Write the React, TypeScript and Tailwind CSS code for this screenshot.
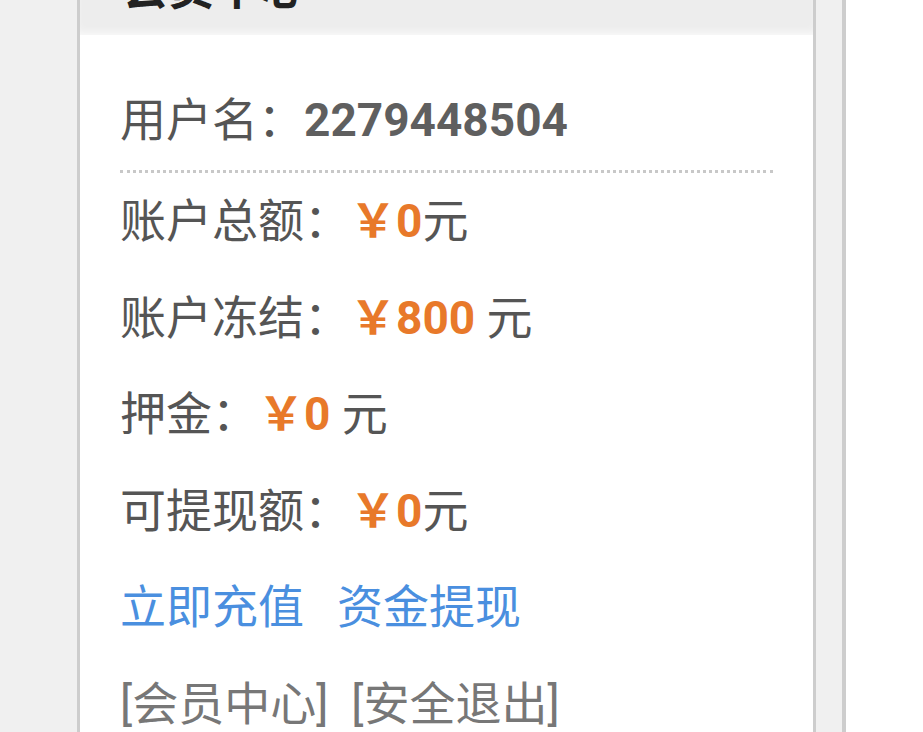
import React from 'react';

type Row = {
    label: string;
    amount: string;
    gap: boolean;
};

const rows: Row[] = [
    { label: '账户总额：', amount: '￥0', gap: false },
    { label: '账户冻结：', amount: '￥800', gap: true },
    { label: '押金：', amount: '￥0', gap: true },
    { label: '可提现额：', amount: '￥0', gap: false },
];

const App: React.FC = () => {
    return (
        <div className="flex h-screen overflow-hidden bg-[#f0f0f0] font-['Roboto','Noto_Sans_CJK_SC',sans-serif]">
            <div className="w-[77px] shrink-0" />
            {/* member panel */}
            <div className="w-[739px] shrink-0 border-x-[3px] border-[#cdcdcd] bg-white flex flex-col">
                <div className="h-[35px] shrink-0 overflow-hidden bg-[#ededed] shadow-[inset_0_-6px_8px_-4px_rgba(255,255,255,0.8)] px-[42px]">
                    <div className="-mt-[35px] text-[46px] leading-[46px] font-bold text-[#222]">会员中心</div>
                </div>
                <div className="px-[40px] pt-[36px] text-[46px] text-[#555]">
                    <div className="h-[102px] leading-[99px] border-b-[3px] border-dotted border-[#c8c8c8]">
                        用户名：<span className="font-bold text-[#5f5f5f]">2279448504</span>
                    </div>
                    {rows.map((r) => (
                        <div key={r.label} className="h-[96.5px] leading-[96.5px] whitespace-pre">
                            {r.label}
                            <span className="font-bold text-[#e8792a]">{r.amount}</span>
                            {r.gap ? ' 元' : '元'}
                        </div>
                    ))}
                    <div className="h-[96.5px] leading-[96.5px] text-[#4a8fdf] flex gap-[33px]">
                        <span>立即充值</span>
                        <span>资金提现</span>
                    </div>
                    <div className="h-[96.5px] leading-[96.5px] text-[#777] whitespace-pre">
                        [会员中心]  [安全退出]
                    </div>
                </div>
            </div>
            <div className="w-[26px] shrink-0" />
            <div className="flex-1 border-l-[4px] border-[#cdcdcd] bg-white" />
        </div>
    );
};

export default App;
